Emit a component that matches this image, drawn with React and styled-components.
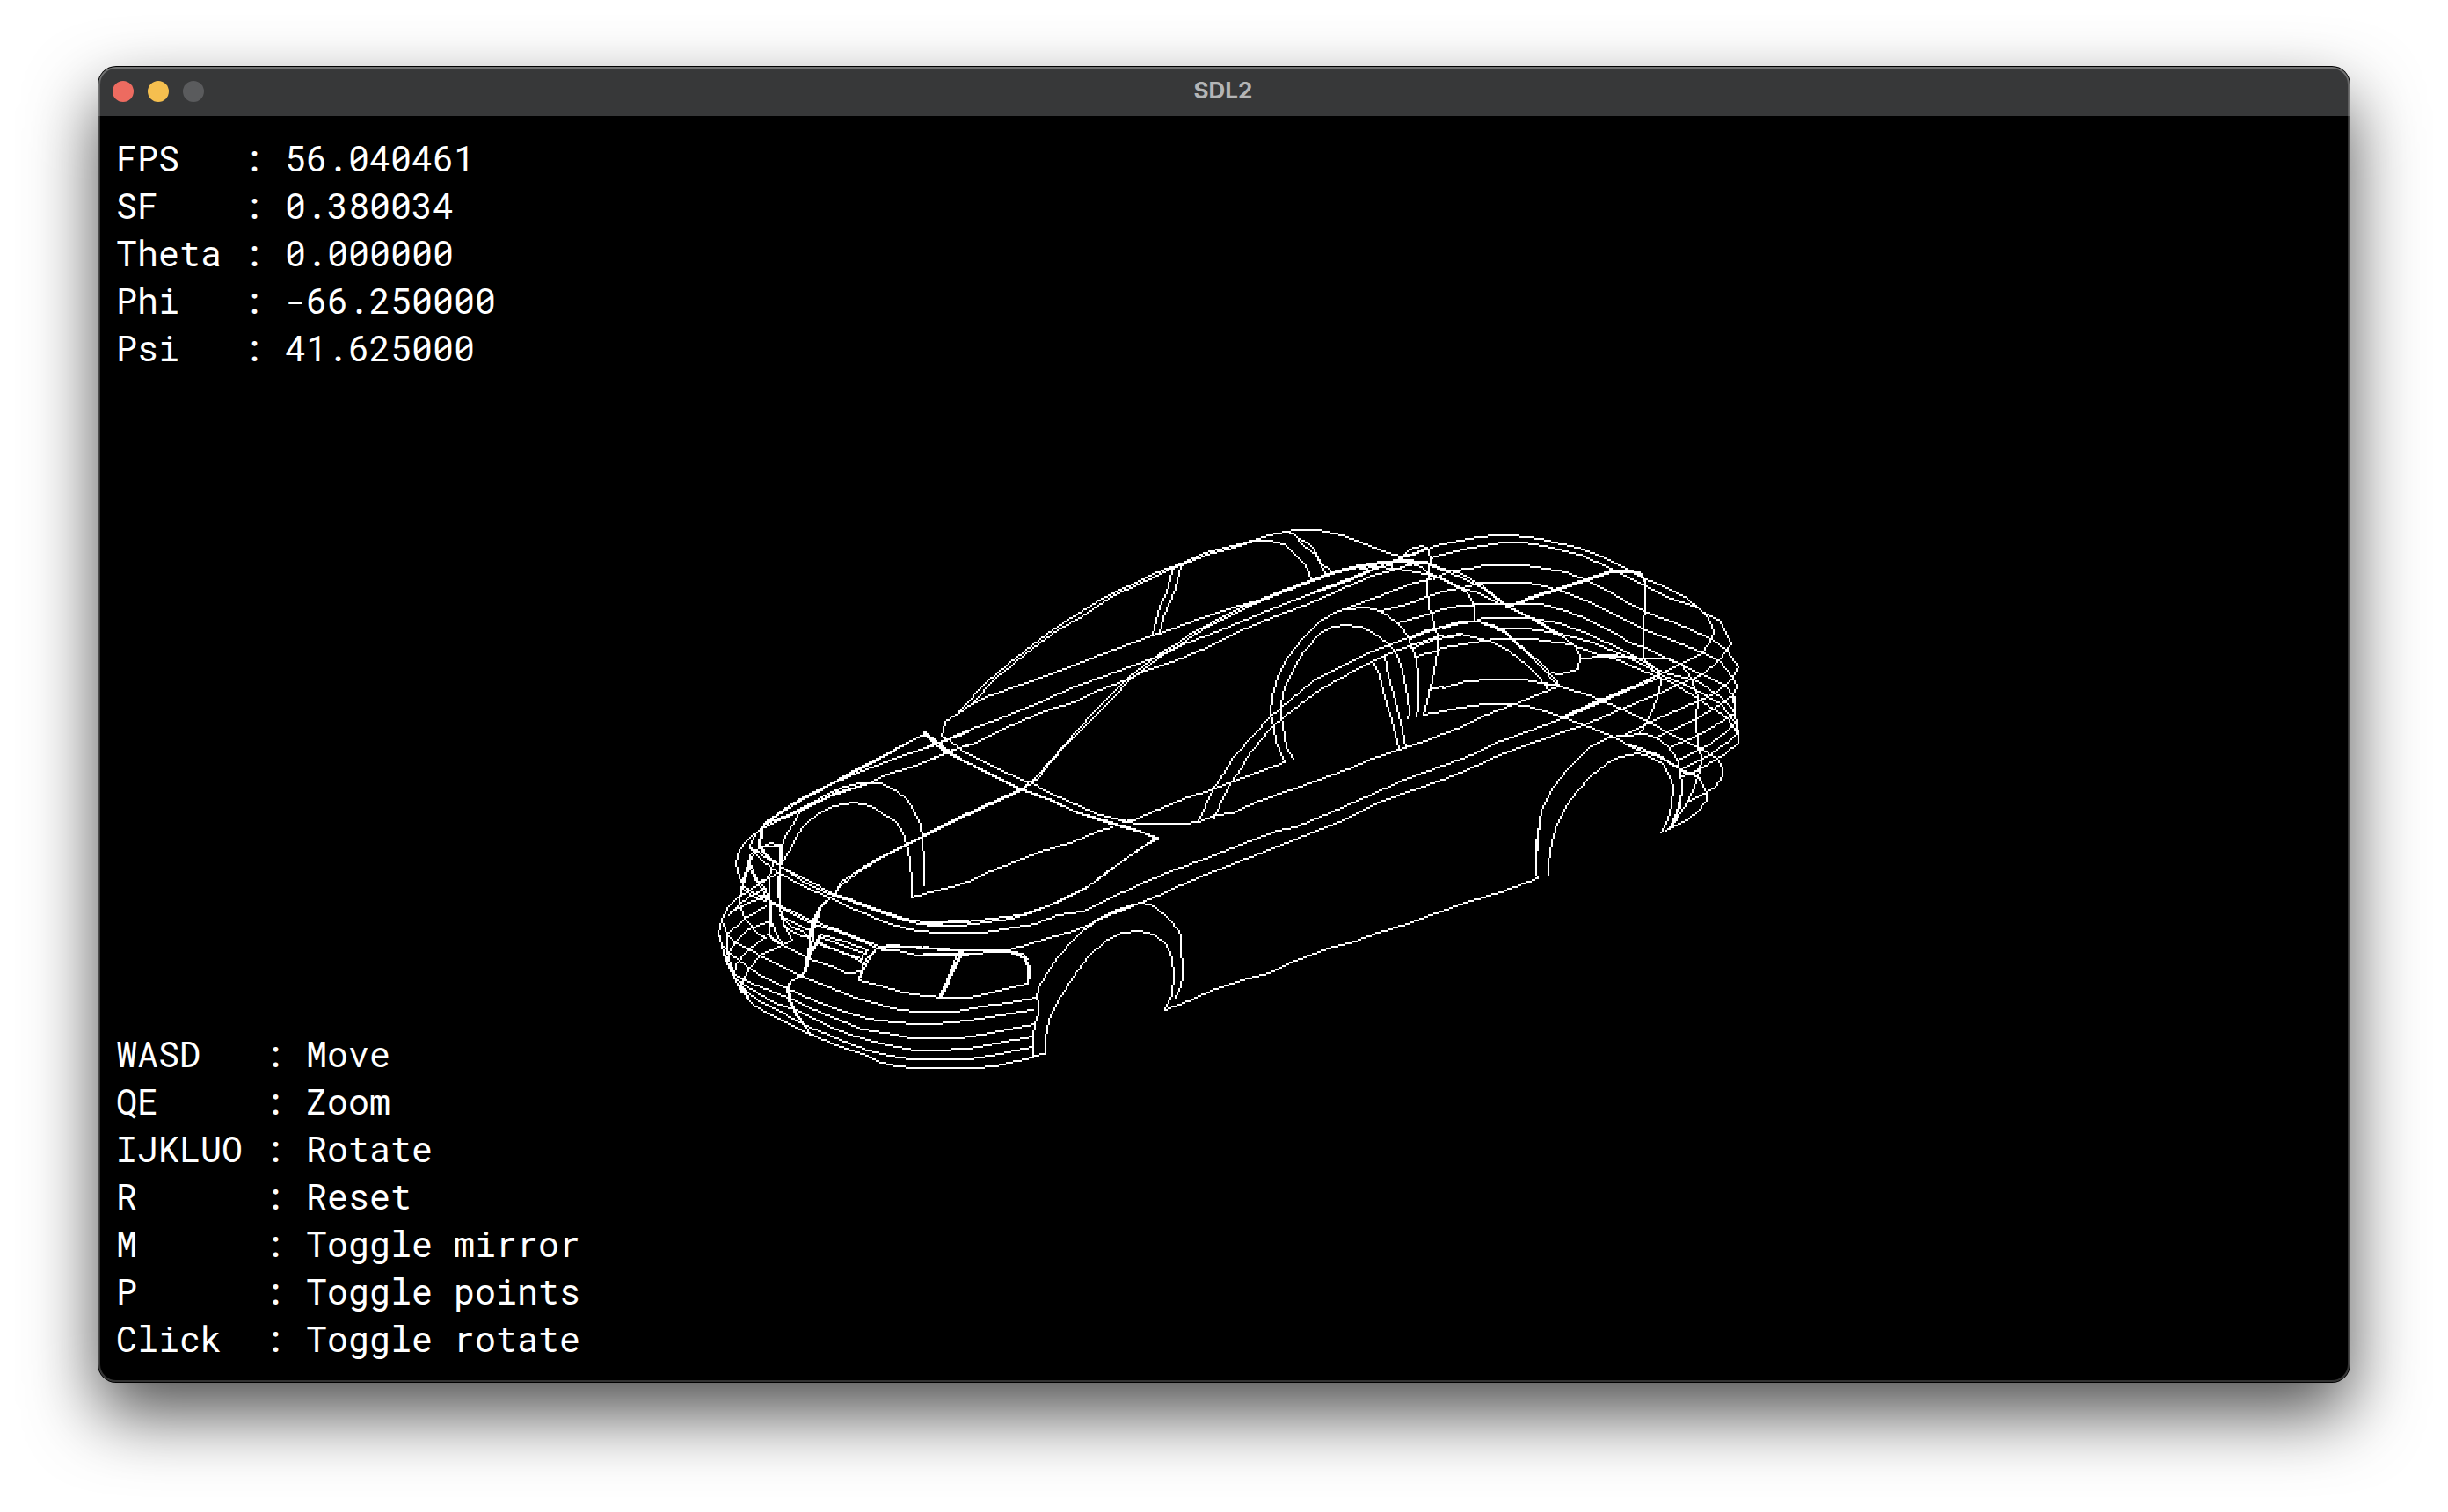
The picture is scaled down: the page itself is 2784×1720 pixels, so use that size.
import React from "react";
import styled, { createGlobalStyle } from "styled-components";

const GlobalStyle = createGlobalStyle`
  html, body { margin: 0; background: #fff; }
  * { box-sizing: border-box; }
`;

const Desktop = styled.main`
  display: flex;
  width: 2784px;
  height: 1720px;
  padding: 76px 112px 148px;
  overflow: hidden;
  background: #fff;
`;

const Window = styled.section`
  position: relative;
  display: flex;
  flex-direction: column;
  width: 2560px;
  height: 1496px;
  border-radius: 20px;
  background: #000;
  box-shadow: 0 0 0 1px #000, 0 36px 80px rgba(0, 0, 0, 0.69);

  &::after {
    content: "";
    position: absolute;
    inset: 0;
    border-radius: 20px;
    box-shadow: inset 0 0 0 2px rgba(255, 255, 255, 0.2),
      inset 0 1px 0 1px rgba(255, 255, 255, 0.12);
    pointer-events: none;
  }
`;

const TitleBar = styled.header`
  display: grid;
  grid-template-columns: 1fr auto 1fr;
  align-items: center;
  height: 56px;
  padding: 0 18px 0 16px;
  border-radius: 20px 20px 0 0;
  background: #373839;
`;

const Lights = styled.div`
  display: flex;
  gap: 16px;
`;

const Light = styled.span`
  width: 24px;
  height: 24px;
  border-radius: 50%;
  background: ${(p) => p.$color};
`;

const Title = styled.h1`
  margin: 0 0 2px;
  font: 700 26px/54px Inter, "Liberation Sans", sans-serif;
  color: #b4b5b6;
`;

const Viewport = styled.div`
  display: grid;
  width: 2560px;
  height: 1440px;

  & > * { grid-area: 1 / 1; }
`;

const Overlay = styled.div`
  display: flex;
  flex-direction: column;
  justify-content: space-between;
  padding: 21px 20px 22px;
`;

const Readout = styled.dl`
  margin: 0;
  font: 400 40px/54px "Roboto Mono", "DejaVu Sans Mono", "Liberation Mono", monospace;
  color: #fff;
`;

const Row = styled.div`
  display: flex;
  height: 54px;
`;

const Name = styled.dt`
  width: ${(p) => p.$chars * 24}px;
`;

const Value = styled.dd`
  margin: 0;
  white-space: pre;
`;

const Wire = styled.svg`
  width: 2560px;
  height: 1440px;
  filter: blur(0.6px);
`;

/* Each panel lists its polylines in units of a third of a pixel from its origin. */
const panels = [
  {
    origin: [800, 800],
    lines: `
752,102 650,158 500,235 415,282 338,322 270,360 212,402 192,435 190,490
752,106 600,190 500,242 410,289 330,330 262,372 205,415 198,440 196,490
900,98 760,150 650,190 545,230 440,275 350,318 270,366 215,405
900,143 840,165 720,212 610,248 565,270 440,313 340,362 205,424
565,274 440,308 400,330 330,358 270,384 210,410
753,622 752,540 746,460 740,410 718,360 690,325 660,300 610,275 580,270 530,272 480,285 420,310 350,350 325,375 300,415 280,450 268,490 262,540
712,662 708,600 705,545 697,500 680,440 655,405 610,372 570,350 510,340 445,350 395,375 350,410 320,445 300,490 275,535 258,550
900,375 800,425 690,480 600,525 540,562 470,610 445,650 400,690 375,735 362,780 360,850 350,915 295,950 287,970 293,1015 320,1070 368,1130
900,380 800,430 690,485 600,530 545,567 474,616 449,652 404,694 380,735 368,780 356,850 346,915
346,920 299,952 292,970 299,1015 326,1070 364,1126
390,720 378,750 372,790 366,830 352,900
405,790 385,825 365,860 352,905
398,790 378,822 360,856
190,490 215,520 258,555 330,592 400,628 445,648 500,670 580,696 650,720 710,738 770,748 900,742
196,490 220,520 262,552 335,600 400,636 445,655 500,677 580,704 650,730 710,746 780,757 890,757
160,495 200,535 250,575 330,620 430,665 520,705 620,745 700,768 790,783 900,783
195,430 150,465 120,500 110,550 120,590 135,620 165,642 210,665
175,455 158,490 175,512
192,490 160,520 155,550 135,600 120,680 140,735 180,780 210,803
190,494 164,524 159,550 139,600 126,650
208,662 222,675 290,702 370,742 450,772 540,805 600,832
225,680 290,710 370,750 450,779 540,812 585,830
195,492 225,478 262,482 266,545 260,560 262,690 270,755 300,805 275,822 240,812 222,795 222,675
195,490 225,488 258,488 262,545 256,640 262,700 266,735
228,678 228,760
155,545 165,580 185,610 222,675
158,545 185,600 205,625 226,675
175,500 235,545 258,550
235,545 232,580 215,602 185,610
225,605 225,675
260,575 215,605 180,620 130,655
128,625 165,655 215,675
228,745 245,770 255,800 270,822
120,655 85,690 65,740 50,780 60,830 75,870 105,940 155,1010
215,632 160,655 120,685 85,722
215,655 140,688 90,710
215,693 140,737 80,790 78,850 105,935 130,985
218,745 150,770 110,812 85,850 82,880 110,945
205,803 150,840 110,890 105,940 150,1005
275,822 200,855 150,910 130,960 150,1000
65,740 80,790 105,815 180,855 240,885 340,930 430,970 520,1005 600,1030 670,1045 735,1052 860,1052 950,1037 1040,1023 1135,1005
50,790 60,825 85,850 120,878 180,918 300,980 400,1025 480,1055 560,1075 650,1088 730,1095 785,1095 910,1083 1050,1058 1125,1045
60,830 80,885 110,925 180,965 300,1010 380,1045 450,1075 540,1110 620,1125 710,1140 870,1143 950,1132 1040,1112 1130,1095
75,880 105,940 180,988 240,1020 330,1055 420,1100 500,1130 600,1160 720,1185 790,1185 900,1177 970,1165 1125,1135
120,965 180,1013 240,1040 340,1095 450,1145 560,1185 640,1205 710,1215 910,1215 980,1202 1125,1172
155,1010 170,1026 200,1046 260,1075 370,1130 450,1165 560,1204 610,1224 660,1237 720,1245 925,1245 990,1238 1125,1208
220,790 270,822 310,845 365,870 450,905 490,920 520,922 530,915
530,945 600,965 680,985 760,998 830,1005 900,1005 960,990 1030,973 1105,958
262,725 320,755 360,778
270,735 300,765 340,775 365,798
270,760 320,790 365,802
400,790 480,812 560,845
395,796 470,822 555,852
370,813 450,845 500,862 535,878
400,820 470,848 540,872
555,850 535,875 540,900 530,940
598,832 570,860 550,900 530,945
590,835 562,865 545,900 535,930
590,836 640,825 710,828 780,836 900,842
600,838 650,832 700,832 760,838 860,845
610,840 660,845 735,858 900,860
875,845 845,915 825,960 808,998
882,848 852,915 832,960 815,998
752,102 790,138 830,170 870,188 900,202
756,98 800,134 835,168 890,192`,
  },
  {
    origin: [1050, 780],
    lines: `
-38,722 0,712 100,685 170,662 230,635 310,600 400,568 500,535 600,495 645,480
680,462 715,457 800,420 900,378 960,362 1060,325
340,350 230,400 150,436 70,474 0,510
340,355 230,405 150,441 70,479 0,515
340,350 385,310 430,258 480,200 530,144 570,100 640,30 690,-20
345,352 390,312 434,262 484,206 540,146 580,112 645,46 705,-20
0,806 140,804 230,797 330,780 420,752 500,718 560,684 620,638 690,593 740,555 796,520
0,815 130,818 210,804 300,794 360,778 450,738 540,698 600,658 700,585 750,550 800,522
0,835 40,843 200,843 280,828 380,810 460,785 540,768 620,735 680,705 760,668 860,625 960,590
290,900 350,885 430,860 510,838 560,820 620,790 700,757 740,742 800,715 880,680 960,645
65,170 85,185 130,220 230,270 350,325 370,328 400,350 520,405 600,440 680,460 720,470 885,470 940,462
0,160 40,195 85,228 160,268 250,311 330,348 430,388 520,426 640,466 700,484 800,520
0,168 45,188 100,232 170,272 250,316 340,356 420,385 530,434 600,458 680,482 750,500 796,524
0,893 60,900 120,905 290,908 335,920 352,935 360,965 360,1000 352,1018
60,905 120,902 290,902 340,914 357,935
0,915 80,914 155,916 260,911
300,911 340,926 355,960 356,1018
125,900 95,975 78,1010 60,1055
132,904 100,975 84,1010 66,1055
385,1065 395,1030 420,980 460,925 520,860 580,805 640,775 700,752 745,743 790,755 840,800 878,850 880,900 885,960 882,1000 872,1040 860,1065
560,822 600,792 660,763 720,745
385,1065 392,1080 392,1120 380,1155 375,1200 375,1265 415,1258 418,1200 430,1145 460,1075 510,990 560,925 620,875 680,845 735,837 790,850 830,885 850,930 855,990 848,1050 835,1085 822,1107`,
  },
  {
    origin: [1050, 580],
    lines: `
65,770 75,720 120,690 165,663 230,635 350,590 480,540 600,497 780,430 805,420 950,368 1060,330 1140,306 1200,288
700,575 820,484 870,452 900,431 950,402 1020,364 1100,328 1200,283
700,582 820,492 870,462 900,441 950,412 1020,372 1100,334 1200,288
0,815 80,780 150,755 250,715 400,655 520,605 620,565 700,538 800,500 870,465 1000,415 1100,372 1200,330
0,862 85,825 180,792 300,735 400,695 530,650 600,617 700,580 760,548 850,520 950,475 1100,405 1200,365
120,685 210,592 290,522 400,441 460,396 540,346 620,295 700,258 800,212 880,183 960,148 1060,122 1140,96 1200,80
165,663 250,575 300,530 350,487 460,410 540,360 630,304 690,270 760,240 850,203 880,190 970,150 1060,130 1130,105 1190,104
847,205 833,285 808,330 795,380 780,430
880,190 860,265 850,295 820,370 805,420`,
  },
  {
    origin: [1400, 580],
    lines: `
150,283 200,265 345,211 440,190 520,175 590,170 660,177 720,201
150,288 200,270 345,216 440,197 520,182 590,175 660,183 720,207
440,200 500,195 560,203 600,205 660,218 720,235
590,175 640,190 680,220 740,243 780,265
150,330 260,288 330,260 400,235 470,207 540,190
260,292 330,266 400,240 470,212 520,190
150,365 250,325 330,290 400,258 480,222 550,205 600,190 660,178
90,97 150,80 195,77 215,70 295,70 380,88 460,115 520,138 580,157
0,128 80,103 130,105 180,118 225,160 255,190 272,238
190,74 210,80 250,122 290,150 300,175 345,212
225,90 262,108 285,135 298,170 310,195 318,220
575,162 600,158 670,134
580,157 630,144 670,130
-110,1063 -65,955 -30,900 10,845 75,770 135,705 200,650 280,585 390,525 480,482 560,452 610,435 670,412 720,397
610,439 670,416 720,401
-55,1050 -40,1010 -5,935 30,885 50,850 130,755 190,700 300,612 400,560 480,520 525,495 610,465 700,434 720,431
620,469 700,442 780,430
-40,943 10,925 180,860
480,518 500,550 520,620 545,700 560,770 575,818
525,495 530,540 550,610 570,700 585,750 598,812
180,860 155,790 145,740 135,700 142,630 160,570 180,520 210,475 240,440 300,382 360,345 400,338 460,333 490,338 530,355 570,390 600,430 615,465 630,510 637,570 637,680 632,705
213,850 190,810 180,770 173,700 172,660 185,600 210,540 250,480 300,425 350,400 390,392 440,397 480,418 530,455 560,485 580,530 590,580 603,640 608,690 603,712
550,207 550,180 590,150 610,135 650,122 670,128 682,165 675,200 670,270 672,330 685,360 692,400 705,430 705,480 692,550 680,610 665,680 655,700 720,685
670,135 700,120 720,117
680,165 700,156 720,153
690,235 740,210 765,208
400,335 500,295 610,255 680,237
515,347 600,318 670,295 720,281
565,388 650,360 720,340
630,500 690,485 720,473
675,615 720,605`,
  },
  {
    origin: [1640, 580],
    lines: `
0,201 70,220 140,258 180,294 222,328
0,207 70,228 140,266 180,302 218,328
0,235 40,252 60,265 130,285 200,318
0,117 60,103 120,93 190,87 245,87 330,100 465,128 545,160 630,203 690,235 760,262 830,297 885,345 950,382 988,460 945,515 890,558 850,580 790,605 740,628 680,650 610,680 480,735 430,755 310,795 180,845 60,895 0,918
0,153 100,128 210,110 270,110 350,122 470,155 580,200 650,235 690,260 780,300 870,335 910,370 928,415 915,455 885,488 815,525 735,567 650,600 520,660 410,708 300,750 200,790 100,835 0,873
735,562 650,602 520,656 410,704
740,572 650,608 545,654 410,712
45,208 90,200 145,188 285,188 420,215 500,242 560,275 620,308 700,350 780,380 920,440 975,480 1010,535 995,570 930,628 850,665 700,728 620,768
0,280 60,265 140,248 290,248 350,260 430,283 520,318 600,365 690,408 760,435 880,485 945,515 995,570 1003,600 990,630 930,675 850,720 730,775
0,340 60,328 150,320 340,320 420,345 500,375 600,430 640,455 690,468 770,508 885,558 960,595 990,630 997,690 960,715 870,770 780,808
120,375 140,370 300,370 400,385 480,415 560,450 640,490 700,525 760,555 870,585 950,640 990,680 1003,720 970,760 900,805 800,852
190,410 220,405 280,405 330,412 430,430 510,455 600,490 680,525 740,560 800,585 880,620 950,665 1000,720 1010,760 980,790 900,840 810,885
0,473 110,452 180,442 310,442 440,460 520,490 600,515 700,555 790,590 870,645 975,710 1010,770 1010,795 970,830 880,885 820,910
0,608 80,585 170,580 280,580 340,590 405,600 500,632 600,675 690,715 800,775 880,815 940,850 957,880 955,910 935,945 900,965 835,1000
-65,697 0,685 100,670 160,662 230,662 290,670 370,690 420,708 500,740 590,775 650,810 740,845 810,885 870,910 905,965 900,995 870,1030 840,1052 785,1080 765,1097
640,800 740,835 845,900 870,890
0,400 60,383 120,378 170,393 210,411 250,444 290,481 340,526 380,571 405,600
0,404 60,387 120,383 170,397 210,417 250,452 290,489 340,536 380,586 405,600
0,435 60,425 80,428 110,432 175,452 230,485 290,530 330,575 362,612
345,590 405,600
0,767 70,740 150,700 250,665 350,620 400,600
60,265 90,290 108,330 110,372
222,330 320,373 400,425 450,465 470,500 465,540 430,555 390,560 375,555
250,341 320,378 400,430
475,507 545,498 600,502 690,508 765,508 815,525
545,494 660,503
220,330 300,298 400,265 490,235 580,209 640,205 675,213 690,250 693,350 687,370 687,508 740,565 747,590 735,640 710,700 685,745 670,762
225,332 300,304 400,271 490,241 580,215 640,211 675,219 684,240
687,508 720,535 746,562
815,525 850,575 870,640 868,720 875,800 885,850 878,890 860,945 835,1000 785,1080
815,890 850,905 868,910
998,640 996,690 1003,740 1010,790
818,960 808,1010 785,1075
323,1200 325,1120 330,1060 340,1025 380,945 430,885 505,808 575,775 620,770 690,765 730,775 770,808 800,850 815,890 820,950 815,1010 790,1070 765,1097
362,1200 375,1130 395,1070 430,1005 460,965 505,910 560,868 610,842 670,830 710,845 750,868 775,910 788,945 785,1010 770,1060 745,1102
620,768 670,745`,
  },
  {
    origin: [1300, 800],
    lines: `
190,403 250,382 300,372 400,333 500,297 600,258 700,222 780,188 875,160 960,130 1020,107
210,530 330,483 460,433 520,420 620,378 760,320 890,260 1020,213
210,585 400,512 550,450 700,390 820,335 1020,258
72,1047 150,1015 250,972 340,945 430,918 520,880 630,838 720,812 800,785 900,750 1000,715 1100,680 1220,642 1348,597 1342,580 1342,490 1348,430
1383,587 1383,535 1382,540`,
  },
];

const CELL = 2;
const LEFT = 112;
const TOP = 132;

/* Steps along a segment on the 1280x720 grid, one cell at a time. */
function plot(cells, x0, y0, x1, y1) {
  const dx = Math.abs(x1 - x0);
  const dy = -Math.abs(y1 - y0);
  const sx = x0 < x1 ? 1 : -1;
  const sy = y0 < y1 ? 1 : -1;
  let err = dx + dy;
  for (;;) {
    cells.add(y0 * 1280 + x0);
    if (x0 === x1 && y0 === y1) return;
    const e2 = 2 * err;
    if (e2 >= dy) { err += dy; x0 += sx; }
    if (e2 <= dx) { err += dx; y0 += sy; }
  }
}

function rasterise(parts) {
  const cells = new Set();
  parts.forEach(({ origin: [ox, oy], lines }) => {
    lines.trim().split("\n").forEach((line) => {
      const pts = line.trim().split(/\s+/).map((pair) => {
        const [x, y] = pair.split(",").map(Number);
        return [
          Math.floor((ox + x / 3 - LEFT) / CELL),
          Math.floor((oy + y / 3 - TOP) / CELL),
        ];
      });
      for (let i = 1; i < pts.length; i += 1) {
        plot(cells, ...pts[i - 1], ...pts[i]);
      }
    });
  });
  return [...cells]
    .map((c) => `M${c % 1280} ${Math.floor(c / 1280)}h1v1h-1z`)
    .join("");
}

const carPath = rasterise(panels);

const stats = [
  ["FPS", "56.040461"],
  ["SF", "0.380034"],
  ["Theta", "0.000000"],
  ["Phi", "-66.250000"],
  ["Psi", "41.625000"],
];

const controls = [
  ["WASD", "Move"],
  ["QE", "Zoom"],
  ["IJKLUO", "Rotate"],
  ["R", "Reset"],
  ["M", "Toggle mirror"],
  ["P", "Toggle points"],
  ["Click", "Toggle rotate"],
];

function List({ rows, chars }) {
  return (
    <Readout>
      {rows.map(([name, value]) => (
        <Row key={name}>
          <Name $chars={chars}>{name}</Name>
          <Value>{`: ${value}`}</Value>
        </Row>
      ))}
    </Readout>
  );
}

export default function App() {
  return (
    <>
      <GlobalStyle />
      <Desktop>
        <Window>
          <TitleBar>
            <Lights>
              <Light $color="#ed6b60" />
              <Light $color="#f5bf4f" />
              <Light $color="#5a5b5d" />
            </Lights>
            <Title>SDL2</Title>
          </TitleBar>
          <Viewport>
            <Wire viewBox="0 0 1280 720" aria-label="Car wireframe">
              <path d={carPath} fill="#fff" shapeRendering="crispEdges" />
            </Wire>
            <Overlay>
              <List rows={stats} chars={6} />
              <List rows={controls} chars={7} />
            </Overlay>
          </Viewport>
        </Window>
      </Desktop>
    </>
  );
}
